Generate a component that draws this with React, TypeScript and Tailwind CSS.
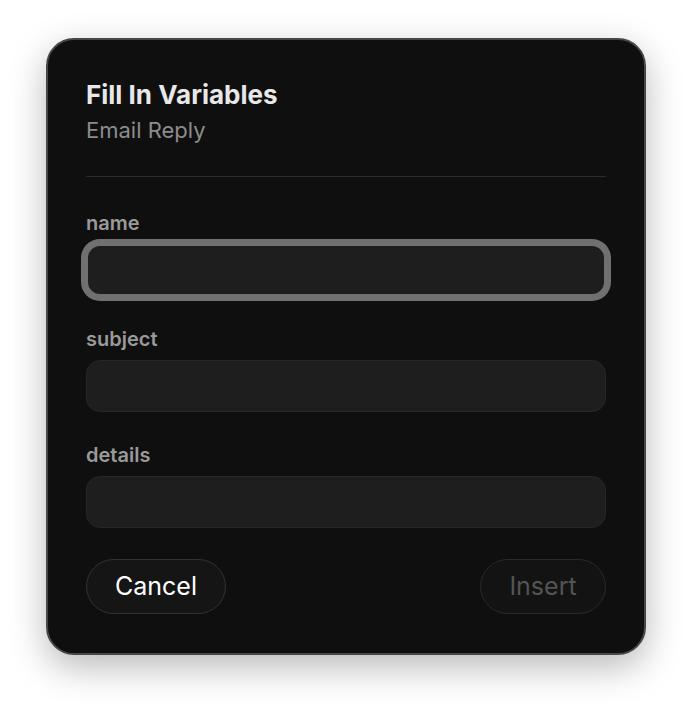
import { useState } from 'react';

const fields = ['name', 'subject', 'details'];

export default function App() {
  const [values, setValues] = useState<Record<string, string>>({});

  return (
    <div
      className="flex min-h-[708px] w-full justify-center bg-white pt-[38px]"
      style={{ fontFamily: 'Inter, "Noto Sans", sans-serif' }}
    >
      <div className="h-[617px] w-[600px] rounded-[28px] border-2 border-[#474747] bg-[#0f0f0f] px-[38px] pt-[39px] shadow-[0_12px_36px_rgba(0,0,0,0.28)]">
        <h2 className="text-[26px] font-bold leading-[32px] text-[#e8e8e8]">Fill In Variables</h2>
        <p className="mt-[6px] text-[22px] leading-[26px] text-[#8c8c8c]">Email Reply</p>

        <div className="mt-[33px] h-px bg-[#2c2c2c]" />

        <div className="mt-[34px] flex flex-col gap-[31px]">
          {fields.map((field, i) => (
            <div key={field} className="flex flex-col gap-[9px]">
              <label className="text-[20px] font-semibold leading-[24px] text-[#9a9a9a]">{field}</label>
              <input
                value={values[field] ?? ''}
                onChange={(e) => setValues({ ...values, [field]: e.target.value })}
                className={
                  i === 0
                    ? 'h-[52px] rounded-[14px] border-2 border-[#707070] bg-[#1e1e1e] px-3 text-[18px] text-white outline-none ring-[5px] ring-[#707070]'
                    : 'h-[52px] rounded-[14px] border border-[#262626] bg-[#1e1e1e] px-3 text-[18px] text-white outline-none'
                }
              />
            </div>
          ))}
        </div>

        <div className="mt-[31px] flex items-center justify-between">
          <button className="h-[55px] w-[140px] rounded-full border border-[#323232] bg-[#151515] text-[25px] text-white">
            Cancel
          </button>
          <button
            disabled
            className="h-[55px] w-[126px] rounded-full border border-[#2a2a2a] bg-[#131313] text-[25px] text-[#545454]"
          >
            Insert
          </button>
        </div>
      </div>
    </div>
  );
}
